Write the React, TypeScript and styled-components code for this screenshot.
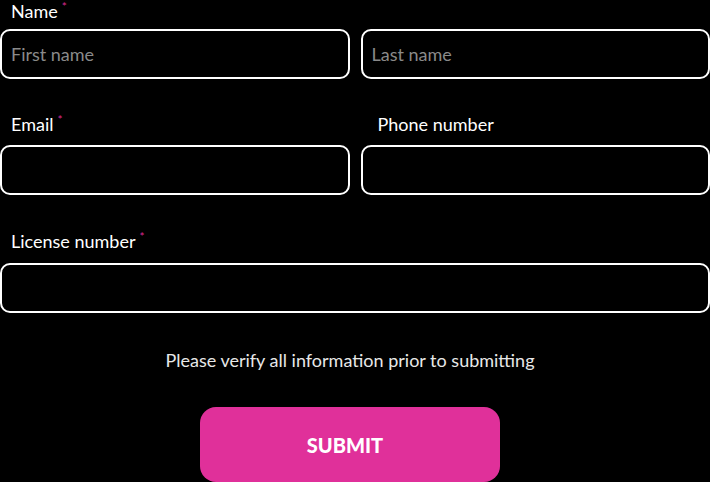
import React from "react";
import styled, { createGlobalStyle } from "styled-components";

const Global = createGlobalStyle`
  html, body {
    margin: 0;
    padding: 0;
    background: #000;
  }
  body {
    font-family: Lato, "Open Sans", sans-serif;
    color: #fff;
  }
`;

const Form = styled.form`
  width: 710px;
  display: flex;
  flex-direction: column;
  margin-top: -1px;
`;

const Row = styled.div<{ $top: number }>`
  display: grid;
  grid-template-columns: 1fr 1fr;
  column-gap: 11px;
  margin-top: ${(p) => p.$top}px;
`;

const FullRow = styled.div<{ $top: number }>`
  display: flex;
  flex-direction: column;
  margin-top: ${(p) => p.$top}px;
`;

const Field = styled.div`
  display: flex;
  flex-direction: column;
`;

const Label = styled.label<{ $gap: number; $indent?: number }>`
  display: block;
  padding-left: ${(p) => p.$indent ?? 11}px;
  font-size: 18px;
  line-height: 24px;
  height: 24px;
  color: #fff;
  margin-bottom: ${(p) => p.$gap}px;
`;

const Spacer = styled.div<{ $gap: number }>`
  height: 24px;
  margin-bottom: ${(p) => p.$gap}px;
`;

const Req = styled.span`
  color: #d6288f;
  font-size: 12px;
  vertical-align: top;
  position: relative;
  top: -4px;
  margin-left: 4px;
`;

const Input = styled.input`
  box-sizing: border-box;
  width: 100%;
  height: 50px;
  margin: 0;
  background: #000;
  border: 2px solid #fff;
  border-radius: 10px;
  padding: 0 9px;
  font-family: Lato, "Open Sans", sans-serif;
  font-size: 18px;
  color: #fff;
  outline: none;
  &::placeholder {
    color: #8a8a8a;
  }
`;

const Note = styled.p`
  margin: 36px 0 0;
  padding-right: 10px;
  text-align: center;
  font-size: 18px;
  line-height: 22px;
  color: #e8e8e8;
`;

const ButtonWrap = styled.div`
  display: flex;
  justify-content: center;
  padding-right: 10px;
  margin-top: 36px;
`;

const Submit = styled.button`
  width: 300px;
  height: 75px;
  border: none;
  border-radius: 16px;
  background: #e0309a;
  color: #fff;
  font-family: Lato, "Open Sans", sans-serif;
  font-weight: 900;
  font-size: 20px;
  letter-spacing: 0;
  padding: 0 10px 0 0;
  cursor: pointer;
`;

export default function App() {
  return (
    <>
      <Global />
      <Form onSubmit={(e) => e.preventDefault()}>
        <Row $top={0}>
          <Field>
            <Label $gap={6}>
              Name<Req>*</Req>
            </Label>
            <Input placeholder="First name" />
          </Field>
          <Field>
            <Spacer $gap={6} />
            <Input placeholder="Last name" />
          </Field>
        </Row>
        <Row $top={33}>
          <Field>
            <Label $gap={9}>
              Email<Req>*</Req>
            </Label>
            <Input type="email" />
          </Field>
          <Field>
            <Label $gap={9} $indent={17}>
              Phone number
            </Label>
            <Input type="tel" />
          </Field>
        </Row>
        <FullRow $top={34}>
          <Label $gap={10}>
            License number<Req>*</Req>
          </Label>
          <Input />
        </FullRow>
        <Note>Please verify all information prior to submitting</Note>
        <ButtonWrap>
          <Submit type="submit">SUBMIT</Submit>
        </ButtonWrap>
      </Form>
    </>
  );
}
